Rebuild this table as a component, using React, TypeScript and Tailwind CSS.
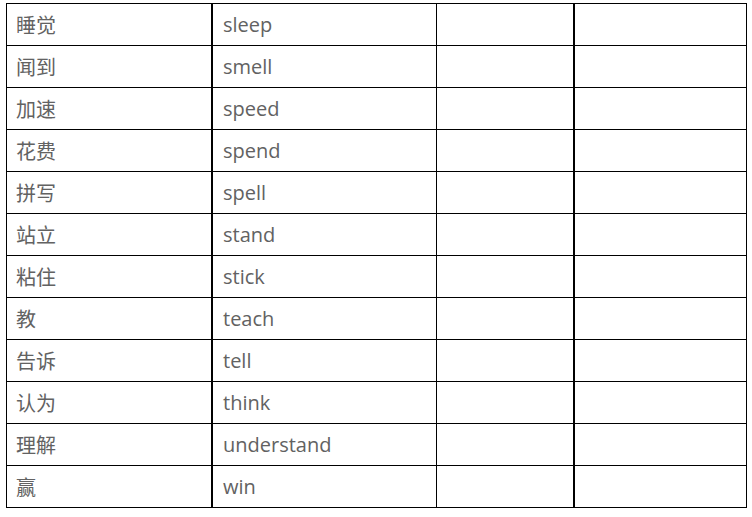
import React from "react";

const rows: [string, string][] = [
  ["睡觉", "sleep"],
  ["闻到", "smell"],
  ["加速", "speed"],
  ["花费", "spend"],
  ["拼写", "spell"],
  ["站立", "stand"],
  ["粘住", "stick"],
  ["教", "teach"],
  ["告诉", "tell"],
  ["认为", "think"],
  ["理解", "understand"],
  ["赢", "win"],
];

export default function App() {
  return (
    <div className="w-[752px] h-[517px] bg-white pt-[3px] pl-[6px]">
      <div className="w-fit border-t border-black">
        {rows.map(([zh, en]) => (
          <div key={en} className="flex h-[42px] border-b border-black text-[20px] text-[#626262]">
            <div
              className="w-[207px] border-l border-r-2 border-black pl-[9px] flex items-center"
              style={{ fontFamily: '"Noto Sans CJK SC", "Noto Sans", sans-serif' }}
            >
              {zh}
            </div>
            <div
              className="w-[224px] border-r border-black pl-[10px] flex items-center"
              style={{ fontFamily: '"Open Sans", "Noto Sans", sans-serif' }}
            >
              {en}
            </div>
            <div className="w-[138px] border-r-2 border-black" />
            <div className="w-[172px] border-r border-black" />
          </div>
        ))}
      </div>
    </div>
  );
}
